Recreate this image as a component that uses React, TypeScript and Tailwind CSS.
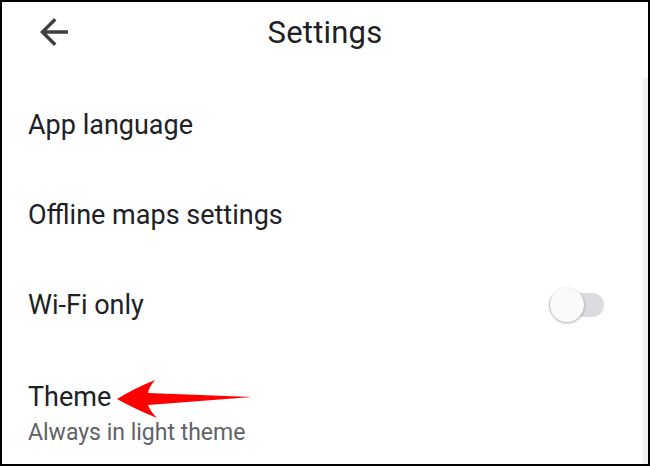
export default function App() {
  return (
    <div
      className="relative box-border h-[466px] w-[650px] overflow-hidden border-2 border-black bg-white text-[#202124]"
      style={{ fontFamily: 'Roboto, "Liberation Sans", sans-serif' }}
    >
      <Header />
      <div className="absolute right-0 top-[76px] bottom-0 w-[5px] bg-[#f1f1f1]" />
      <div className="flex flex-col">
        <Row label="App language" />
        <Row label="Offline maps settings" />
        <Row label="Wi-Fi only" right={<Toggle />} />
        <div className="flex flex-col pl-[26px] pt-[30px]">
          <span className="text-[27px] leading-[34px]">Theme</span>
          <span className="mt-[2px] text-[23px] leading-[34px] text-[#5f6368]">Always in light theme</span>
        </div>
      </div>
      <PointerArrow />
    </div>
  );
}

function Header() {
  return (
    <div className="relative flex h-[62px] items-center justify-center">
      <button className="absolute left-[31px] top-[9px] flex h-[42px] w-[42px] items-center justify-center text-[#3c4043]">
        <svg viewBox="0 0 24 24" width="42" height="42" fill="currentColor">
          <path d="M20 11H7.83l5.59-5.59L12 4l-8 8 8 8 1.41-1.41L7.83 13H20v-2z" />
        </svg>
      </button>
      <h1 className="text-[31px] leading-[62px] font-normal tracking-[0.2px]">Settings</h1>
    </div>
  );
}

function Row({ label, right }: { label: string; right?: React.ReactNode }) {
  return (
    <div className="flex h-[90px] items-center justify-between pl-[26px] pr-[44px] first:mt-[16px]">
      <span className="text-[27px] leading-[34px]">{label}</span>
      {right}
    </div>
  );
}

function Toggle() {
  return (
    <div className="relative h-[24px] w-[55px] rounded-full bg-[#dadce0]">
      <div className="absolute left-[1px] top-[-5px] h-[34px] w-[34px] rounded-full bg-[#fafafa] shadow-[0_1px_3px_rgba(0,0,0,0.35)]" />
    </div>
  );
}

function PointerArrow() {
  return (
    <svg className="absolute left-[108px] top-[374px]" width="147" height="46" viewBox="0 0 147 46">
      <path
        d="M7 23 Q25 12 45 4 Q39 11 38 17 L142 21 L38 29 Q40 35 47 42 Q25 33 7 23 Z"
        fill="#ff0000"
      />
    </svg>
  );
}
